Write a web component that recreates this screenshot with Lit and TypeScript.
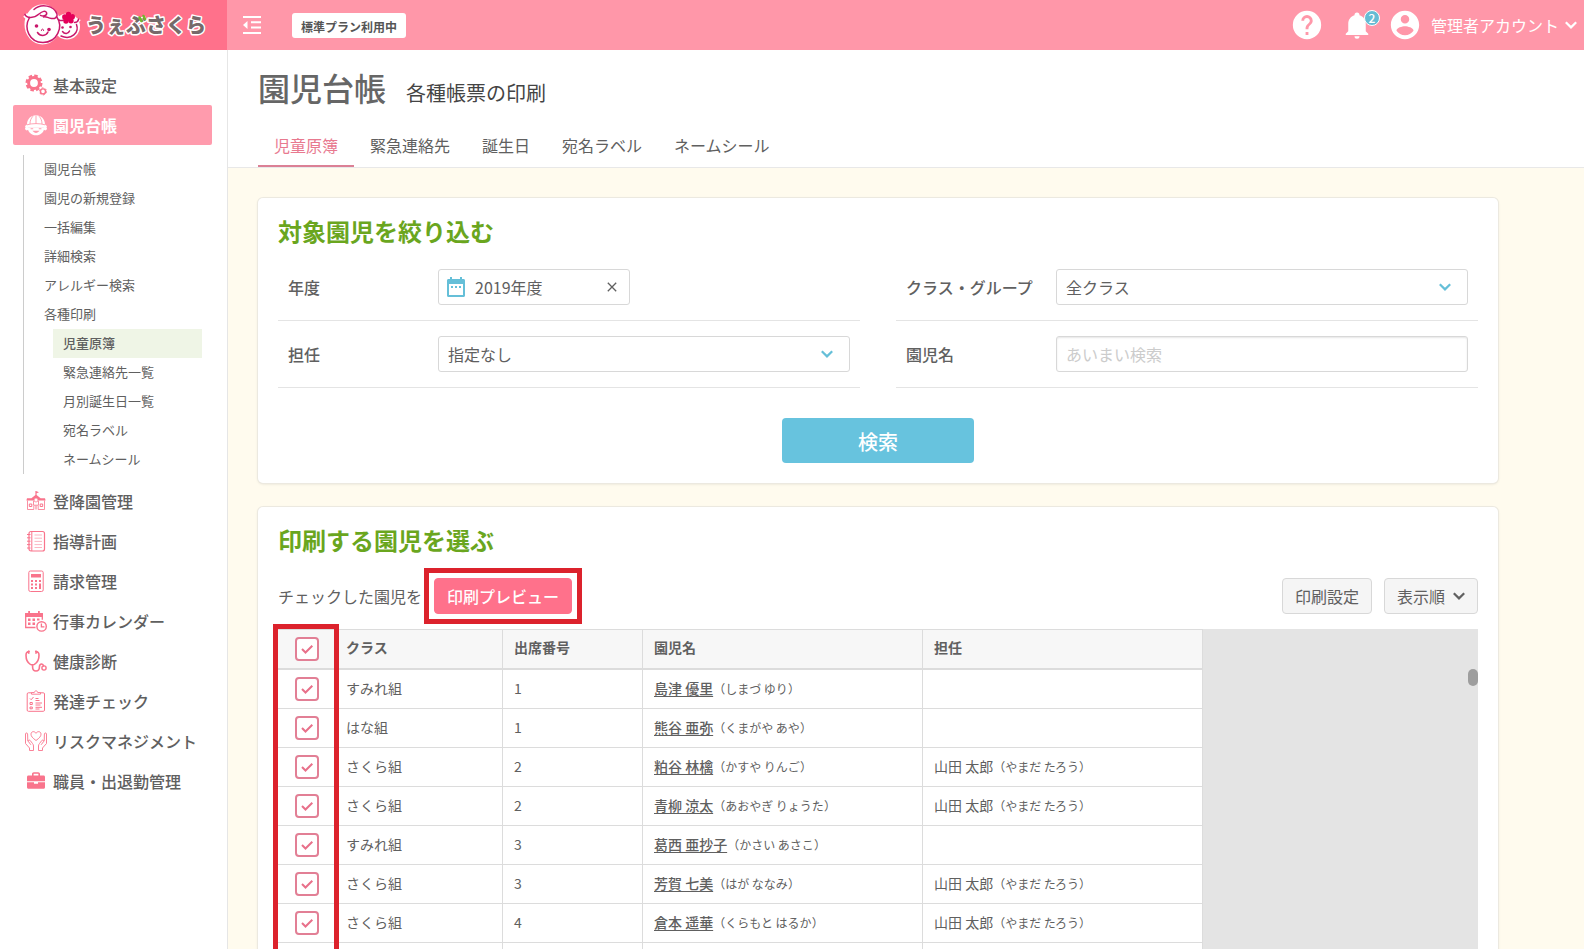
import { LitElement, html, svg, css } from "lit";
import { customElement, state } from "lit/decorators.js";
import { classMap } from "lit/directives/class-map.js";

interface Child {
  room: string;
  no: string;
  name: string;
  kana: string;
  teacher: boolean;
}

const CHILDREN: Child[] = [
  { room: "すみれ組", no: "1", name: "島津 優里", kana: "しまづ ゆり", teacher: false },
  { room: "はな組", no: "1", name: "熊谷 亜弥", kana: "くまがや あや", teacher: false },
  { room: "さくら組", no: "2", name: "粕谷 林檎", kana: "かすや りんご", teacher: true },
  { room: "さくら組", no: "2", name: "青柳 涼太", kana: "あおやぎ りょうた", teacher: true },
  { room: "すみれ組", no: "3", name: "葛西 亜抄子", kana: "かさい あさこ", teacher: false },
  { room: "さくら組", no: "3", name: "芳賀 七美", kana: "はが ななみ", teacher: true },
  { room: "さくら組", no: "4", name: "倉本 遥華", kana: "くらもと はるか", teacher: true },
  { room: "", no: "", name: "", kana: "", teacher: false },
];

const SUB_MENU = ["園児台帳", "園児の新規登録", "一括編集", "詳細検索", "アレルギー検索", "各種印刷"];
const PRINT_MENU = ["児童原簿", "緊急連絡先一覧", "月別誕生日一覧", "宛名ラベル", "ネームシール"];
const TABS = ["児童原簿", "緊急連絡先", "誕生日", "宛名ラベル", "ネームシール"];

const icons = {
  gears: svg`
    <circle cx="9" cy="9" r="5.4" fill="none" stroke="currentColor" stroke-width="3"/>
    <circle cx="9" cy="9" r="7.4" fill="none" stroke="currentColor" stroke-width="2.200" stroke-dasharray="3.600 2.210"/>
    <circle cx="18" cy="17.400" r="2.500" fill="none" stroke="currentColor" stroke-width="1.400"/>
    <circle cx="18" cy="17.400" r="3.500" fill="none" stroke="currentColor" stroke-width="1" stroke-dasharray="1.900 1.760"/>`,
  child: svg`
    <path fill="currentColor" d="M2 10.500C2 5 6 1.200 11 1.200S20 5 20 10.500l1.600 1.300c.6.6.2 1.400-.6 1.400H1c-.8 0-1.200-.8-.6-1.400z"/>
    <path fill="none" stroke="#ff9bad" stroke-width=".9" d="M11 1.500V10M8 2.200C5.800 4.500 5 7 5 10M14 2.200c2.200 2.300 3 4.800 3 7.800M2 10.800c5-1.600 13-1.600 18 0"/>
    <path fill="currentColor" d="M2.600 13.200h16.800C19.200 18 15.800 21.300 11 21.300S2.800 18 2.600 13.200z"/>
    <circle cx="1.800" cy="14.600" r="1.800" fill="currentColor"/><circle cx="20.200" cy="14.600" r="1.800" fill="currentColor"/>
    <path fill="none" stroke="#ff9bad" stroke-width="1.100" stroke-linecap="round" d="M6 14.800h1.800M14.200 14.800H16M8.600 17.200c1.400 1.600 3.400 1.600 4.800 0z"/>`,
  school: svg`
    <path fill="currentColor" d="M11 1l3 1.200-2.400 1V5l4 3.200H20l.6 2.400H1.400L2 8.200h4.400L10.400 5V1z"/>
    <path fill="none" stroke="currentColor" stroke-width=".8" d="M2.500 10.500v9h6.300v-4.300h4.400v4.300h6.300v-9M8.500 11v4M13.500 11v4"/>
    <path fill="none" stroke="currentColor" stroke-width="1" d="M4.300 14h2.500v2.500H4.300zM15.200 14h2.500v2.500h-2.500zM11 15.500v4"/>
    <circle cx="11" cy="10" r="2" fill="#fff" stroke="currentColor" stroke-width=".7"/>`,
  notebook: svg`
    <rect x="4" y="1.500" width="15.500" height="19.500" rx="2" fill="none" stroke="currentColor" stroke-width="1.200"/>
    <path fill="none" stroke="currentColor" stroke-width="1" d="M6.800 1.500V21M2 4.500h3.500M2 7.800h3.500M2 11.200h3.500M2 14.600h3.500M2 18h3.500"/>
    <path fill="none" stroke="currentColor" stroke-width=".8" opacity=".65" d="M9.500 5h7.500M9.500 8.200h7.500M9.500 11.400h7.500M9.500 14.600h7.500M9.500 17.500h7.500"/>`,
  calculator: svg`
    <rect x="3.800" y="1" width="14.400" height="20.500" rx="1.600" fill="none" stroke="currentColor" stroke-width="1"/>
    <path fill="currentColor" d="M6 4h10v3.500H6zM6 10h2v2H6zM10 10h2v2h-2zM14 10h2v2h-2zM6 13.500h2v2H6zM10 13.500h2v2h-2zM14 13.500h2V19h-2zM6 17h2v2H6zM10 17h2v2h-2z"/>`,
  calendar: svg`
    <path fill="currentColor" d="M0 3.500h18V7H0zM3.200 1h1.800v3.500H3.200zM13 1h1.800v3.500H13z"/>
    <path fill="none" stroke="currentColor" stroke-width="1.300" d="M10.500 17.500H.7V3.700h16.600v6"/>
    <path fill="currentColor" d="M3 8.500h2.500v2.500H3zM7.500 8.500H10v2.500H7.500zM12 8.500h2.500v2H12zM3 12.500h2.500V15H3zM7.500 12.500H10V15H7.500z"/>
    <circle cx="16.600" cy="16.400" r="4.700" fill="#fff" stroke="currentColor" stroke-width="1.400"/>
    <path fill="none" stroke="currentColor" stroke-width="1.300" d="M16.400 13.600v3.200h3"/>`,
  stethoscope: svg`
    <path fill="none" stroke="currentColor" stroke-width="1.600" stroke-linecap="round" d="M4.200 1.500C1.500 1.500 1 3 1 5.200c0 4.500 2 7.800 4.400 9.200 1.200.6 2.800.6 4 0C11.800 13 14 9.700 14 5.200c0-2.200-.7-3.700-3.300-3.700M3.800 1v2.200M11 1v2.200M7.600 14.800V17c0 2.500 1.400 4 3.400 4s3.400-1.500 3.400-4c0-1.800 1-3 2.400-3 1 0 1.500.8 1.700 1.900"/>
    <circle cx="19" cy="18" r="2.100" fill="none" stroke="currentColor" stroke-width="1.400"/>`,
  clipboard: svg`
    <rect x="2.200" y="2.800" width="17.300" height="18.500" rx="1.200" fill="none" stroke="currentColor" stroke-width="1"/>
    <path fill="#fff" stroke="currentColor" stroke-width=".9" d="M6.500 4.200V2.600h2.700C9.600.3 12.400.3 12.800 2.600h2.700v1.600z"/>
    <path fill="none" stroke="currentColor" stroke-width="1" d="M5 8.500l1.200 1.200L8.500 7M5 12.500h2.300v2H5zM5 17h2.300v1.800H5zM10.500 8.500h3M10.500 10.500h4M10.500 13h6.500M10.500 15h5M10.500 17.300h6.500M10.500 19h4"/>`,
  hands: svg`
    <path fill="none" stroke="currentColor" stroke-width=".9" stroke-linejoin="round" d="M11 10.500C7.500 8 6 6.200 6 4.200 6 1.200 9.600.8 11 3.300 12.400.8 16 1.200 16 4.200c0 2-1.500 3.800-5 6.300zM2.800 11.200L2.600 4C2.400 2.600.6 2.600.5 4v9.500l4 4.500v2.500h4V16c0-1-.4-1.800-1-2.500L5.200 10.500c-1-1-2.400 0-1.700 1.200l2.400 3.100M19.200 11.200l.2-7.200c.2-1.400 2-1.400 2.100 0v9.500l-4 4.500v2.500h-4V16c0-1 .4-1.800 1-2.500l2.300-3c1-1 2.400 0 1.700 1.200l-2.400 3.100"/>`,
  briefcase: svg`
    <path fill="currentColor" fill-rule="evenodd" d="M7 5.500V4c0-1 .8-1.800 1.800-1.800h4.400c1 0 1.800.8 1.800 1.800v1.500h3.500c1 0 1.500.6 1.500 1.500v4.300H2V7c0-.9.5-1.500 1.500-1.500zM8.600 5.500h4.800V3.800H8.600zM2 12.200h7v1.500h4v-1.500h7v5c0 .9-.5 1.500-1.500 1.500h-15c-1 0-1.500-.6-1.500-1.500z"/>`,
};

const icon = (body: unknown) =>
  html`<svg class="menu-icon" viewBox="0 0 22 22" aria-hidden="true">${body}</svg>`;

const chevron = (cls: string) => html`<svg class="chevron ${cls}" viewBox="0 0 12 8" aria-hidden="true">
  <path d="M.8 1.200L6 6.400l5.200-5.200" fill="none" stroke="currentColor" stroke-width="2.200" />
</svg>`;

@customElement("app-header")
class AppHeader extends LitElement {
  static styles = css`
    :host {
      display: flex;
      height: 50px;
      background: #ff97a9;
      color: #fff;
    }
    .brand {
      box-sizing: border-box;
      flex: 0 0 227px;
      display: flex;
      align-items: center;
      padding-left: 22px;
      background: #ff718b;
    }
    .logo {
      width: 186px;
      height: 46px;
    }
    .logo-text {
      font: 900 20px "Noto Sans CJK JP", sans-serif;
      fill: #76696a;
      stroke: #fff;
      stroke-width: 3px;
      stroke-linejoin: round;
      paint-order: stroke;
    }
    .bar {
      flex: 1;
      display: flex;
      align-items: center;
      padding: 0 7px 0 16px;
    }
    button {
      display: flex;
      align-items: center;
      padding: 0;
      border: 0;
      background: none;
      color: inherit;
      font: inherit;
      cursor: pointer;
    }
    .fold {
      width: 18px;
      height: 18px;
    }
    .plan {
      margin: 0 auto 0 31px;
      padding: 2px 9px 0;
      border-radius: 3px;
      background: #fff;
      color: #555;
      font-size: 12px;
      font-weight: 700;
      line-height: 23px;
    }
    .disc {
      width: 34px;
      height: 34px;
    }
    .bell-button {
      position: relative;
      margin: 0 16px 0 18px;
    }
    .bell {
      width: 30px;
      height: 30px;
    }
    .count {
      position: absolute;
      top: 0;
      right: -8px;
      width: 14px;
      border: 1px solid #fff;
      border-radius: 8px;
      background: #65bcd4;
      font-size: 12px;
      font-weight: 500;
      line-height: 14px;
      text-align: center;
    }
    .account {
      gap: 6px;
      font-size: 16px;
      line-height: 24px;
    }
    .account .disc {
      margin-right: 3px;
    }
    .chevron {
      width: 12px;
      height: 8px;
    }
  `;

  render() {
    return html`
      <div class="brand">
        <svg class="logo" viewBox="0 0 186 46" role="img" aria-label="うぇぶさくら">
          <g stroke="#fff" stroke-width="5" fill="#fff" stroke-linejoin="round">
            <ellipse cx="20.500" cy="22.500" rx="15.500" ry="17.500" />
            <circle cx="45" cy="24.500" r="10.500" />
            <path d="M3 13c4 4 9 4 14 1M52 19c3 0 4-1 4.500-2" />
          </g>
          <g fill="none" stroke="#c9186b" stroke-width="1.500" stroke-linecap="round" stroke-linejoin="round">
            <path d="M34.500 14.500C42 25 35 40.500 21 40.500 7 40.500 1.500 26 7.500 15.500" />
            <path d="M12 7.500C19 1 32 3.500 35 12c.8 3-2 5-5.500 4.500-4-.6-5.500-2.500-8-1.500" />
            <path d="M3 12.500c1.500 4 9 4 14-.5 3.500-3 6.500-3.500 7.500-1.500 1 2.500-2.500 4.500-6 2.800" />
            <path d="M37 18c1.500.8 3 .8 4.500 0M52.500 20.500c2.200 0 3.600-1.200 4-3.200M54.500 22.500c3 8-5 16-15.500 11.500" />
            <path d="M15.500 30.500c2.500 4 8.500 4 10.500-.5M40.500 29.500c2 2.800 6 2.400 7-.5" />
          </g>
          <g fill="#c9186b">
            <circle cx="14.500" cy="24" r="1.800" />
            <circle cx="27" cy="27.500" r="1.800" />
            <path d="M19.500 29c-.5-2.500 2.500-2.500 2 0" fill="none" stroke="#c9186b" />
            <circle cx="40.500" cy="25.500" r="1.300" />
            <circle cx="48.500" cy="25" r="1.300" />
          </g>
          <g fill="#e5005a">
            <circle cx="46.500" cy="12.500" r="2.700" />
            <circle cx="42.800" cy="15" r="2.700" />
            <circle cx="44" cy="19" r="2.700" />
            <circle cx="49" cy="18.800" r="2.700" />
            <circle cx="50.300" cy="14.800" r="2.700" />
            <circle cx="46.500" cy="16" r="3" />
          </g>
          <text class="logo-text" x="64" y="31">うぇぶさくら</text>
          <path d="M117.500 15.500l2 3.500M121.500 14l1.500 3" stroke="#74b62c" stroke-width="2.600" stroke-linecap="round" />
        </svg>
      </div>
      <div class="bar">
        <button type="button" aria-label="メニュー">
          <svg class="fold" viewBox="0 0 18 18">
            <path d="M0 1h18M8 6.300h10M8 11.600h10M0 17h18" stroke="currentColor" stroke-width="2" />
            <path d="M4.500 5v8L0 9z" fill="currentColor" />
          </svg>
        </button>
        <span class="plan">標準プラン利用中</span>
        <button type="button" aria-label="ヘルプ">
          <svg class="disc" viewBox="0 0 24 24" fill="currentColor">
            <path
              d="M15.070,11.250L14.170,12.170C13.450,12.890 13,13.500 13,15H11V14.500C11,13.390 11.450,12.390 12.170,11.670L13.410,10.410C13.780,10.050 14,9.550 14,9C14,7.890 13.100,7 12,7A2,2 0 0,0 10,9H8A4,4 0 0,1 12,5A4,4 0 0,1 16,9C16,9.880 15.640,10.670 15.070,11.250M13,19H11V17H13M12,2A10,10 0 1,0 22,12A10,10 0 0,0 12,2Z"
            />
          </svg>
        </button>
        <button type="button" class="bell-button" aria-label="お知らせ">
          <svg class="bell" viewBox="0 0 24 24" fill="currentColor">
            <path
              d="M21,19V20H3V19L5,17V11C5,7.900 7.030,5.170 10,4.290C10,4.190 10,4.100 10,4A2,2 0 0,1 12,2A2,2 0 0,1 14,4C14,4.100 14,4.190 14,4.290C16.970,5.170 19,7.900 19,11V17L21,19M14,21A2,2 0 0,1 12,23A2,2 0 0,1 10,21"
            />
          </svg>
          <span class="count">2</span>
        </button>
        <button type="button" class="account">
          <svg class="disc" viewBox="0 0 24 24" fill="currentColor">
            <path
              d="M12 2C6.480 2 2 6.480 2 12s4.480 10 10 10 10-4.480 10-10S17.520 2 12 2zm0 3c1.660 0 3 1.340 3 3s-1.340 3-3 3-3-1.340-3-3 1.340-3 3-3zm0 14.200c-2.500 0-4.710-1.280-6-3.220.030-1.990 4-3.080 6-3.080 1.990 0 5.970 1.090 6 3.080-1.290 1.940-3.500 3.220-6 3.220z"
            />
          </svg>
          管理者アカウント ${chevron("")}
        </button>
      </div>
    `;
  }
}

@customElement("side-menu")
class SideMenu extends LitElement {
  static styles = css`
    :host {
      display: block;
      box-sizing: border-box;
      padding: 15px 15px 0 13px;
      border-right: 1px solid #e6e6e6;
      background: #fff;
    }
    a {
      color: #606060;
      text-decoration: none;
    }
    .item {
      display: flex;
      align-items: center;
      gap: 6px;
      height: 40px;
      padding-left: 12px;
      border-radius: 2px;
      font-size: 16px;
      font-weight: 500;
      white-space: nowrap;
    }
    .item.active {
      background: #ff9bad;
      color: #fff;
      font-weight: 700;
    }
    .menu-icon {
      flex: none;
      width: 22px;
      height: 22px;
      color: #f9748c;
    }
    .active .menu-icon {
      color: #fff;
    }
    .sub {
      margin: 10px 10px 7px;
      border-left: 1px solid #ccc;
      font-size: 13px;
      line-height: 27px;
    }
    .sub a {
      display: block;
      padding: 0 0 2px 20px;
    }
    .print {
      margin-left: 29px;
    }
    .print a {
      padding-left: 10px;
    }
    .print .current {
      background: #eff5e6;
      font-weight: 500;
    }
  `;

  private item(body: unknown, label: string, active = false) {
    return html`<a href="#" class=${classMap({ item: true, active })}>${icon(body)}<span>${label}</span></a>`;
  }

  render() {
    return html`
      <nav aria-label="メインメニュー">
        ${this.item(icons.gears, "基本設定")} ${this.item(icons.child, "園児台帳", true)}
        <div class="sub">
          ${SUB_MENU.map((label) => html`<a href="#">${label}</a>`)}
          <div class="print">
            ${PRINT_MENU.map((label, i) => html`<a href="#" class=${classMap({ current: i === 0 })}>${label}</a>`)}
          </div>
        </div>
        ${this.item(icons.school, "登降園管理")} ${this.item(icons.notebook, "指導計画")}
        ${this.item(icons.calculator, "請求管理")} ${this.item(icons.calendar, "行事カレンダー")}
        ${this.item(icons.stethoscope, "健康診断")} ${this.item(icons.clipboard, "発達チェック")}
        ${this.item(icons.hands, "リスクマネジメント")} ${this.item(icons.briefcase, "職員・出退勤管理")}
      </nav>
    `;
  }
}

@customElement("child-table")
class ChildTable extends LitElement {
  @state() private checked = CHILDREN.map(() => true);

  static styles = css`
    :host {
      display: block;
      position: relative;
      background: #e4e4e4;
    }
    table {
      width: 925px;
      border-collapse: separate;
      border-spacing: 0;
      table-layout: fixed;
      background: #fff;
      font-size: 14px;
      line-height: 20px;
    }
    .col-check {
      width: 57px;
    }
    .col-room {
      width: 168px;
    }
    .col-no {
      width: 140px;
    }
    th,
    td {
      box-sizing: border-box;
      height: 39px;
      padding: 0 11px 2px;
      border-right: 1px solid #dcdcdc;
      border-bottom: 1px solid #dcdcdc;
      text-align: left;
      white-space: nowrap;
    }
    th {
      height: 41px;
      padding-bottom: 4px;
      border-top: 1px solid #dcdcdc;
      border-bottom-width: 2px;
      background: #f7f7f7;
      font-weight: 700;
    }
    .check-cell {
      padding: 0 0 0 17px;
    }
    .name {
      color: inherit;
      font-weight: 500;
      text-underline-offset: 2px;
    }
    .kana {
      font-size: 12px;
    }
    .pick {
      display: grid;
      width: 24px;
      cursor: pointer;
    }
    .pick > * {
      grid-area: 1 / 1;
    }
    .pick input {
      appearance: none;
      box-sizing: border-box;
      width: 24px;
      height: 24px;
      margin: 0;
      border: 2px solid #e27f95;
      border-radius: 4px;
      background: #fff;
    }
    .tick {
      width: 24px;
      height: 24px;
      visibility: hidden;
      pointer-events: none;
    }
    input:checked + .tick {
      visibility: visible;
    }
    .thumb {
      position: absolute;
      top: 40px;
      right: 0;
      width: 10px;
      height: 17px;
      border-radius: 5px;
      background: #9e9e9e;
    }
    .marker {
      position: absolute;
      top: -5px;
      bottom: -5px;
      left: -5px;
      width: 56px;
      border: 5px solid #dc222c;
      pointer-events: none;
    }
  `;

  private box(label: string, checked: boolean, change: (value: boolean) => void) {
    return html`<label class="pick">
      <input
        type="checkbox"
        aria-label=${label}
        .checked=${checked}
        @change=${(e: Event) => change((e.target as HTMLInputElement).checked)}
      />
      <svg class="tick" viewBox="0 0 24 24" aria-hidden="true">
        <path d="M7 12l3.500 3.500L17.300 8.700" fill="none" stroke="#e8708a" stroke-width="2" />
      </svg>
    </label>`;
  }

  render() {
    return html`
      <table>
        <colgroup>
          <col class="col-check" />
          <col class="col-room" />
          <col class="col-no" />
          <col />
          <col />
        </colgroup>
        <thead>
          <tr>
            <th scope="col" class="check-cell">
              ${this.box("すべて選択", this.checked.every(Boolean), (v) => {
                this.checked = this.checked.map(() => v);
              })}
            </th>
            <th scope="col">クラス</th>
            <th scope="col">出席番号</th>
            <th scope="col">園児名</th>
            <th scope="col">担任</th>
          </tr>
        </thead>
        <tbody>
          ${CHILDREN.map(
            (c, i) => html`<tr>
              <td class="check-cell">
                ${this.box(c.name, this.checked[i], (v) => {
                  this.checked = this.checked.map((old, j) => (j === i ? v : old));
                })}
              </td>
              <td>${c.room}</td>
              <td>${c.no}</td>
              <td>
                ${c.name ? html`<a href="#" class="name">${c.name}</a><span class="kana">（${c.kana}）</span>` : ""}
              </td>
              <td>${c.teacher ? html`山田 太郎<span class="kana">（やまだ たろう）</span>` : ""}</td>
            </tr>`
          )}
        </tbody>
      </table>
      <div class="thumb"></div>
      <div class="marker"></div>
    `;
  }
}

@customElement("app-root")
class AppRoot extends LitElement {
  static styles = css`
    :host {
      display: grid;
      grid-template: 50px minmax(0, 1fr) / 228px minmax(0, 1fr);
      height: 100vh;
      overflow: hidden;
      background: #fffbee;
      color: #606060;
      font-family: "Noto Sans CJK JP", "Noto Sans", sans-serif;
      font-size: 16px;
      line-height: 24px;
    }
    app-header {
      grid-column: 1 / -1;
    }
    main {
      overflow: hidden;
    }
    .page-head {
      padding: 13px 30px 0;
      border-bottom: 1px solid #e8e8e8;
      background: #fff;
    }
    .title {
      display: flex;
      align-items: baseline;
      gap: 20px;
      margin-bottom: 16px;
    }
    h1 {
      margin: 0;
      color: #666;
      font-size: 32px;
      font-weight: 500;
      line-height: 48px;
    }
    .subtitle {
      margin: 0;
      color: #444;
      font-size: 20px;
    }
    .tabs {
      display: flex;
    }
    .tab {
      padding: 0 16px 2px;
      border-bottom: 2px solid transparent;
      color: inherit;
      line-height: 36px;
      text-decoration: none;
    }
    .tab.active {
      border-color: #db8095;
      color: #e8798f;
    }
    .content {
      display: grid;
      gap: 24px;
      max-width: 1240px;
      padding: 30px;
    }
    .card {
      padding: 15px 20px 20px;
      border-radius: 5px;
      background: #fff;
      box-shadow: 0 0 0 1px #ece9e0, 0 1px 3px rgba(0, 0, 0, 0.12);
    }
    h2 {
      margin: 0;
      color: #6aa61e;
      font-size: 24px;
      font-weight: 700;
      line-height: 36px;
    }
    .fields {
      display: grid;
      grid-template-columns: 1fr 1fr;
      column-gap: 36px;
      margin: 5px 0 30px;
    }
    .field {
      display: grid;
      grid-template-columns: 150px minmax(0, 1fr);
      align-items: center;
      padding: 15px 10px;
      border-bottom: 1px solid #e4e4e4;
    }
    .field > label {
      font-weight: 500;
    }
    input,
    select,
    button {
      box-sizing: border-box;
      margin: 0;
      color: inherit;
      font: inherit;
    }
    .box {
      width: 100%;
      height: 36px;
      padding: 0 9px;
      border: 1px solid #d8d8d8;
      border-radius: 3px;
      background: #fff;
    }
    .box::placeholder {
      color: #ccc;
      opacity: 1;
    }
    .text {
      box-shadow: inset 0 1px 2px rgba(0, 0, 0, 0.1);
    }
    .select {
      display: grid;
      align-items: center;
    }
    .select > * {
      grid-area: 1 / 1;
    }
    .select select {
      appearance: none;
    }
    .chevron {
      width: 12px;
      height: 8px;
    }
    .chevron.blue {
      justify-self: end;
      margin-right: 17px;
      color: #65bfd8;
      pointer-events: none;
    }
    .year {
      box-sizing: border-box;
      display: flex;
      align-items: center;
      gap: 10px;
      width: 192px;
      padding-left: 8px;
    }
    .year input {
      flex: 1;
      min-width: 0;
      padding: 0;
      border: 0;
      background: none;
    }
    .calendar {
      width: 18px;
      height: 20px;
    }
    .clear {
      display: flex;
      padding: 3px;
      border: 0;
      background: none;
    }
    .clear svg {
      width: 10px;
      height: 10px;
    }
    .search {
      display: block;
      width: 192px;
      height: 45px;
      margin: 0 auto;
      padding: 2px 0 0;
      border: 0;
      border-radius: 4px;
      background: #67c3de;
      color: #fff;
      font-size: 20px;
      font-weight: 500;
    }
    .toolbar {
      display: flex;
      align-items: center;
      gap: 12px;
      margin: 20px 0 15px;
    }
    .marked {
      position: relative;
      display: flex;
      margin-right: auto;
    }
    .marked::after {
      content: "";
      position: absolute;
      inset: -10px;
      border: 5px solid #dc222c;
      pointer-events: none;
    }
    .preview,
    .tool {
      display: flex;
      align-items: center;
      gap: 8px;
      height: 36px;
      padding: 0 12px;
      border: 1px solid #d8d8d8;
      border-radius: 4px;
      background: #f5f5f5;
      white-space: nowrap;
    }
    .preview {
      border-color: #ff718b;
      background: #ff718b;
      color: #fff;
      font-weight: 500;
    }
  `;

  render() {
    return html`
      <app-header></app-header>
      <side-menu></side-menu>
      <main>
        <header class="page-head">
          <div class="title">
            <h1>園児台帳</h1>
            <p class="subtitle">各種帳票の印刷</p>
          </div>
          <nav class="tabs" aria-label="帳票">
            ${TABS.map((t, i) => html`<a href="#" class=${classMap({ tab: true, active: i === 0 })}>${t}</a>`)}
          </nav>
        </header>
        <div class="content">
          <section class="card">
            <h2>対象園児を絞り込む</h2>
            <div class="fields">
              <div class="field">
                <label for="year">年度</label>
                <div class="box year">
                  <svg class="calendar" viewBox="0 0 18 20" aria-hidden="true">
                    <path
                      fill="#65bfd8"
                      fill-rule="evenodd"
                      d="M3 0h2v2h8V0h2v2h1.500c.9 0 1.500.600 1.500 1.500v15c0 .9-.6 1.500-1.500 1.500h-15C.6 20 0 19.400 0 18.500v-15C0 2.600.6 2 1.500 2H3zM2 7v11h14V7zM4 9h2v2H4zM8 9h2v2H8zM12 9h2v2h-2z"
                    />
                  </svg>
                  <input id="year" type="text" value="2019年度" />
                  <button type="button" class="clear" aria-label="クリア">
                    <svg viewBox="0 0 10 10"><path d="M.8.8l8.400 8.400M9.200.8L.8 9.200" stroke="currentColor" stroke-width="1.300" /></svg>
                  </button>
                </div>
              </div>
              <div class="field">
                <label for="room">クラス・グループ</label>
                <div class="select">
                  <select id="room" class="box"><option>全クラス</option></select>
                  ${chevron("blue")}
                </div>
              </div>
              <div class="field">
                <label for="teacher">担任</label>
                <div class="select">
                  <select id="teacher" class="box"><option>指定なし</option></select>
                  ${chevron("blue")}
                </div>
              </div>
              <div class="field">
                <label for="child">園児名</label>
                <input id="child" class="box text" type="text" placeholder="あいまい検索" />
              </div>
            </div>
            <button type="button" class="search">検索</button>
          </section>
          <section class="card">
            <h2>印刷する園児を選ぶ</h2>
            <div class="toolbar">
              <span>チェックした園児を</span>
              <div class="marked"><button type="button" class="preview">印刷プレビュー</button></div>
              <button type="button" class="tool">印刷設定</button>
              <button type="button" class="tool">表示順 ${chevron("")}</button>
            </div>
            <child-table></child-table>
          </section>
        </div>
      </main>
    `;
  }
}
